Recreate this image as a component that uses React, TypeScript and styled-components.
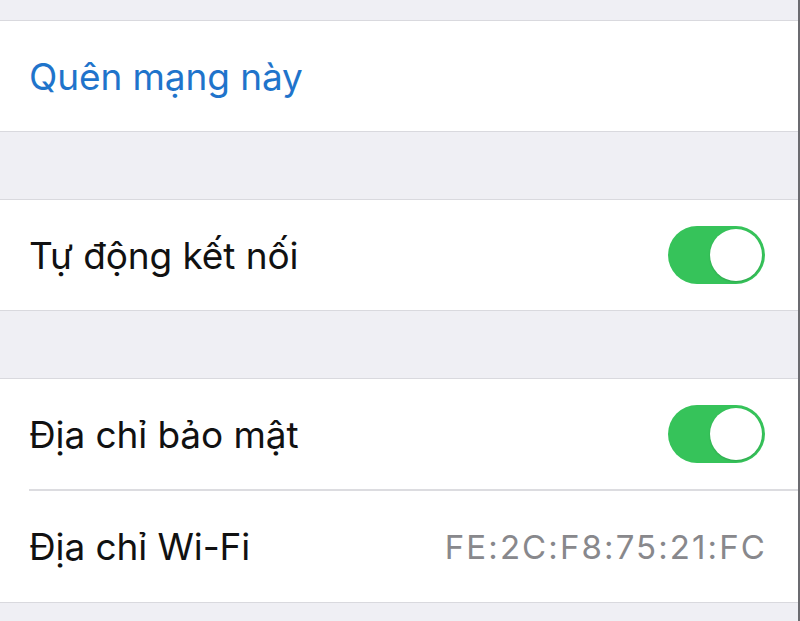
import styled, { createGlobalStyle } from "styled-components";

const GlobalStyle = createGlobalStyle`
  html, body {
    margin: 0;
    padding: 0;
    background: #efeff4;
  }
  body {
    font-family: Inter, "Noto Sans", "Liberation Sans", sans-serif;
    -webkit-font-smoothing: antialiased;
  }
`;

// settings page: grey canvas with white grouped cells
const Page = styled.div`
  width: 800px;
  height: 621px;
  box-sizing: border-box;
  background: #efeff4;
  padding-top: 20px;
  border-right: 2px solid #6b6b70;
  overflow: hidden;
  display: flex;
  flex-direction: column;
  gap: 67px;
`;

const Group = styled.div`
  background: #fff;
  border-top: 1px solid #d9d9de;
  border-bottom: 1px solid #d9d9de;
`;

const Row = styled.div<{ $divider?: boolean; $height?: number }>`
  height: ${({ $height }) => $height ?? 110}px;
  box-sizing: border-box;
  margin-left: 29px;
  padding-right: 33px;
  display: flex;
  align-items: center;
  justify-content: space-between;
  border-bottom: ${({ $divider }) => ($divider ? "2px solid #dcdce0" : "none")};
`;

const Label = styled.span<{ $tone?: "link" | "plain" }>`
  font-size: 37px;
  letter-spacing: -0.1px;
  color: ${({ $tone }) => ($tone === "link" ? "#1f74cb" : "#111")};
`;

const Value = styled.span`
  font-size: 33px;
  color: #88888c;
  letter-spacing: 2.1px;
  margin-right: -2px;
`;

const Track = styled.div<{ $on: boolean }>`
  width: 97px;
  height: 58px;
  border-radius: 29px;
  background: ${({ $on }) => ($on ? "#36c35a" : "#e5e5ea")};
  display: flex;
  align-items: center;
  justify-content: ${({ $on }) => ($on ? "flex-end" : "flex-start")};
  padding: 3px;
  box-sizing: border-box;
`;

const Knob = styled.div`
  width: 52px;
  height: 52px;
  border-radius: 50%;
  background: #fff;
  box-shadow: 0 1px 2px rgba(0, 0, 0, 0.15);
`;

function Switch({ on }: { on: boolean }) {
  return (
    <Track $on={on}>
      <Knob />
    </Track>
  );
}

export default function App() {
  return (
    <>
      <GlobalStyle />
      <Page>
        <Group>
          <Row>
            <Label $tone="link">Quên mạng này</Label>
          </Row>
        </Group>
        <Group>
          <Row>
            <Label>Tự động kết nối</Label>
            <Switch on />
          </Row>
        </Group>
        <Group>
          <Row $divider $height={112}>
            <Label>Địa chỉ bảo mật</Label>
            <Switch on />
          </Row>
          <Row $height={111}>
            <Label>Địa chỉ Wi-Fi</Label>
            <Value>FE:2C:F8:75:21:FC</Value>
          </Row>
        </Group>
      </Page>
    </>
  );
}
